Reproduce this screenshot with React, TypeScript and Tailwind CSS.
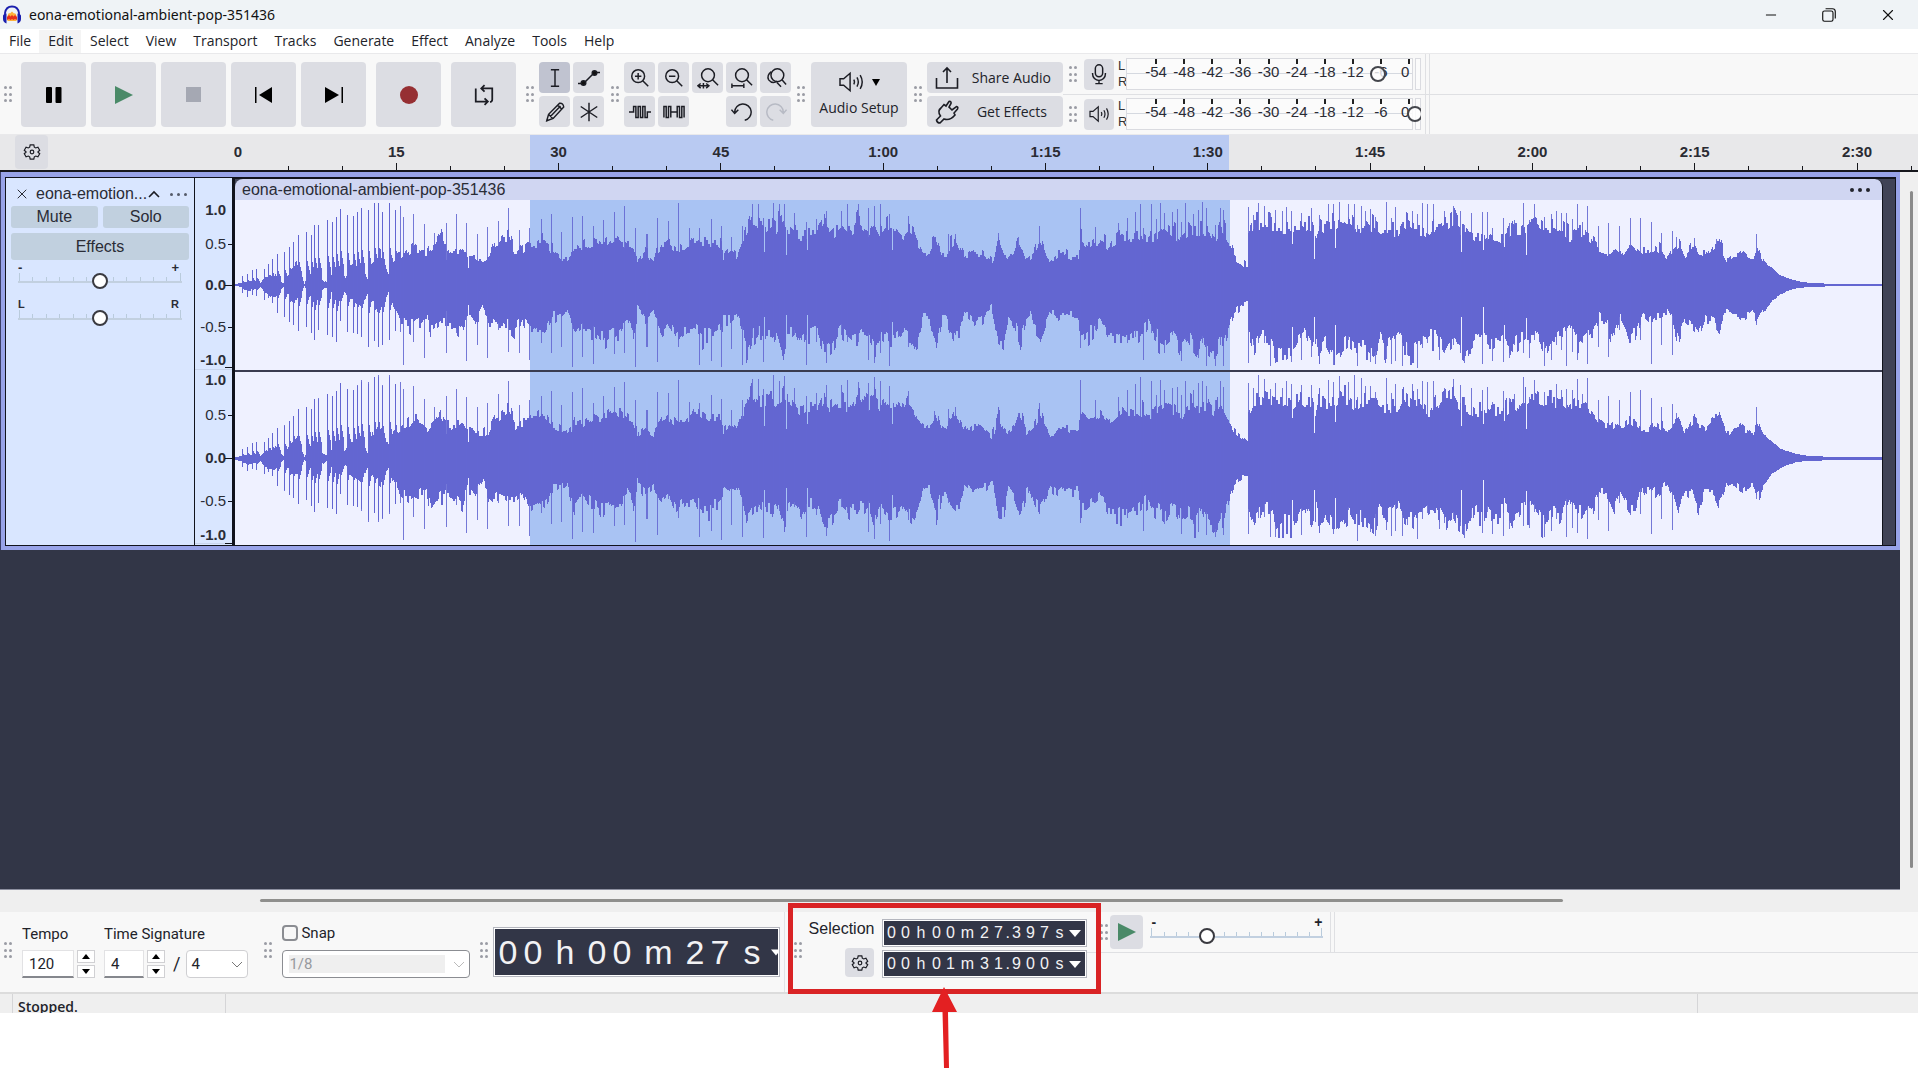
import React from "react";
import { LuMinus, LuX } from "react-icons/lu";

const ICON = "fill-none stroke-[#1c1d24] stroke-[1.6]";

// [x, peak above zero, peak below zero], in pixels of a 1645 x 170 clip
const BODY: number[][] = [
  [0, 1, 1], [6, 3, 3], [13, 5, 8], [25, 3, 3], [30, 10, 12], [40, 13, 15], [48, 2, 2], [55, 20, 16], [62, 28, 20],
  [69, 2, 2], [80, 28, 20], [87, 6, 6], [91, 4, 3], [102, 22, 18], [110, 10, 8], [115, 21, 20], [125, 28, 28],
  [132, 5, 8], [137, 25, 15], [145, 32, 28], [153, 13, 8], [157, 25, 20], [165, 28, 35], [175, 35, 40], [180, 38, 37],
  [192, 30, 32], [195, 34, 48], [200, 39, 43], [205, 47, 37], [212, 32, 38], [222, 35, 42], [227, 37, 47], [232, 30, 30],
  [240, 27, 35], [247, 24, 22], [251, 27, 28], [254, 27, 38], [260, 40, 40], [268, 47, 38], [273, 48, 40], [280, 32, 42],
  [287, 37, 35], [295, 40, 48], [302, 40, 43], [310, 43, 47], [318, 32, 30], [328, 25, 28], [332, 27, 25], [336, 30, 38],
  [340, 39, 47], [348, 37, 40], [358, 43, 45], [365, 40, 53], [375, 47, 48], [385, 45, 45], [392, 40, 35], [398, 38, 48],
  [403, 25, 24], [410, 33, 33], [417, 23, 27], [420, 33, 35], [425, 40, 45], [432, 43, 37], [440, 37, 55], [448, 35, 45],
  [458, 47, 43], [465, 45, 51], [475, 42, 48], [483, 40, 43], [488, 30, 32], [493, 35, 35], [500, 30, 30], [505, 43, 42],
  [510, 57, 62], [515, 70, 52], [522, 60, 48], [528, 58, 52], [535, 63, 52], [540, 57, 46], [547, 68, 68], [552, 58, 45],
  [558, 53, 42], [565, 50, 58], [572, 53, 45], [582, 53, 48], [588, 66, 62], [593, 48, 65], [598, 53, 58], [605, 58, 45],
  [615, 52, 52], [622, 65, 52], [632, 55, 48], [638, 62, 62], [645, 50, 48], [653, 58, 55], [660, 58, 55], [667, 52, 47],
  [672, 60, 55], [677, 53, 63], [682, 40, 55], [687, 32, 33], [693, 35, 32], [700, 45, 57], [705, 30, 35], [710, 28, 35],
  [713, 38, 45], [719, 45, 52], [723, 35, 52], [728, 27, 28], [738, 33, 37], [745, 32, 32], [750, 27, 27], [755, 22, 22],
  [758, 28, 35], [762, 45, 55], [767, 30, 58], [772, 27, 32], [778, 32, 38], [783, 45, 55], [790, 27, 35], [794, 28, 28],
  [798, 35, 42], [804, 48, 52], [808, 38, 43], [814, 22, 27], [822, 29, 33], [829, 32, 30], [835, 28, 30], [842, 28, 32],
  [844, 48, 52], [852, 40, 48], [858, 42, 45], [863, 47, 37], [872, 38, 55], [885, 52, 55], [892, 48, 55], [902, 50, 52],
  [912, 45, 40], [917, 47, 48], [928, 57, 58], [938, 50, 48], [945, 45, 57], [952, 55, 52], [960, 52, 65], [965, 52, 55],
  [972, 55, 65], [978, 45, 70], [983, 57, 58], [988, 52, 58], [993, 40, 42], [998, 28, 27], [1005, 22, 20], [1011, 18, 18],
  [1012, 48, 48], [1018, 60, 65], [1025, 62, 52], [1035, 60, 52], [1039, 58, 70], [1045, 58, 66], [1057, 58, 66],
  [1063, 62, 55], [1068, 58, 48], [1075, 60, 65], [1080, 46, 48], [1083, 60, 68], [1090, 58, 58], [1097, 58, 70],
  [1103, 63, 65], [1112, 62, 55], [1118, 55, 62], [1130, 63, 62], [1138, 58, 66], [1143, 52, 48], [1150, 52, 62],
  [1162, 52, 48], [1168, 62, 62], [1177, 55, 65], [1184, 56, 58], [1193, 48, 52], [1200, 58, 52], [1208, 63, 66],
  [1217, 67, 55], [1222, 58, 65], [1228, 55, 70], [1237, 47, 55], [1245, 48, 52], [1253, 52, 58], [1268, 47, 52],
  [1275, 57, 62], [1283, 53, 52], [1292, 62, 52], [1298, 62, 48], [1307, 58, 70], [1315, 58, 55], [1325, 57, 52],
  [1332, 48, 38], [1338, 53, 58], [1348, 53, 52], [1355, 45, 48], [1362, 38, 32], [1370, 33, 38], [1377, 35, 52],
  [1383, 32, 32], [1392, 40, 52], [1398, 35, 50], [1405, 30, 28], [1412, 30, 35], [1418, 37, 33], [1430, 27, 25],
  [1435, 33, 35], [1441, 40, 58], [1448, 28, 35], [1457, 42, 38], [1462, 33, 47], [1468, 30, 32], [1475, 40, 35],
  [1482, 43, 48], [1489, 25, 25], [1498, 28, 28], [1505, 32, 33], [1515, 25, 28], [1520, 38, 38], [1525, 27, 28],
  [1530, 20, 22], [1535, 17, 15], [1542, 10, 10], [1550, 7, 6], [1560, 4, 3], [1572, 2, 2], [1601, 1, 1], [1645, 1, 1],
];

const PEAKS: number[][] = [
  [7, 9, 8], [12, 11, 12], [17, 15, 10], [21, 16, 11], [29, 16, 15], [33, 21, 13], [37, 26, 18], [42, 31, 28],
  [49, 33, 32], [54, 38, 37], [58, 43, 40], [63, 50, 46], [71, 53, 42], [76, 50, 48], [79, 60, 55], [83, 60, 45],
  [92, 65, 50], [97, 63, 52], [101, 68, 57], [105, 76, 36], [112, 70, 47], [118, 69, 48], [122, 73, 49], [126, 77, 52],
  [133, 75, 62], [139, 82, 56], [143, 82, 62], [147, 73, 60], [154, 82, 55], [160, 75, 46], [165, 79, 47], [168, 68, 80],
  [178, 71, 57], [189, 61, 73], [199, 52, 42], [211, 62, 68], [221, 71, 48], [231, 62, 76], [242, 51, 60], [252, 58, 73],
  [263, 64, 45], [273, 77, 67], [284, 55, 68], [294, 57, 75], [306, 66, 58], [316, 71, 68], [326, 53, 62], [337, 68, 82],
  [347, 69, 72], [358, 59, 79], [368, 65, 55], [379, 73, 69], [389, 79, 68], [400, 57, 82], [411, 51, 62], [421, 67, 77],
  [432, 64, 40], [442, 82, 62], [453, 57, 45], [463, 57, 80], [475, 66, 76], [485, 59, 82], [495, 48, 64], [506, 59, 80],
  [516, 81, 53], [522, 81, 50], [527, 67, 77], [537, 82, 50], [543, 81, 55], [548, 81, 68], [558, 72, 50], [570, 63, 80],
  [580, 66, 57], [590, 74, 78], [605, 74, 50], [611, 81, 57], [622, 81, 57], [632, 77, 75], [638, 79, 78], [644, 81, 68],
  [653, 71, 81], [672, 69, 62], [698, 48, 50], [712, 51, 45], [719, 51, 50], [762, 52, 55], [782, 48, 50], [803, 59, 50],
  [844, 77, 63], [859, 58, 45], [882, 62, 50], [891, 67, 58], [899, 73, 52], [904, 81, 50], [907, 57, 75], [915, 81, 48],
  [920, 66, 52], [924, 82, 55], [928, 72, 68], [936, 73, 50], [941, 76, 55], [945, 63, 76], [949, 82, 55], [957, 71, 68],
  [962, 75, 73], [966, 83, 58], [970, 77, 81], [979, 60, 81], [984, 77, 60], [987, 75, 81], [1012, 78, 78], [1017, 70, 60],
  [1022, 82, 58], [1028, 79, 58], [1034, 72, 81], [1039, 75, 78], [1046, 74, 60], [1050, 78, 75], [1055, 74, 77],
  [1065, 72, 75], [1075, 77, 72], [1083, 70, 75], [1092, 81, 58], [1097, 81, 80], [1103, 83, 68], [1112, 81, 55],
  [1118, 81, 60], [1121, 60, 81], [1125, 79, 62], [1129, 74, 60], [1134, 76, 77], [1139, 68, 79], [1150, 83, 74],
  [1155, 67, 79], [1159, 78, 76], [1166, 63, 81], [1171, 62, 70], [1176, 74, 60], [1181, 71, 83], [1186, 82, 63],
  [1191, 81, 58], [1197, 81, 55], [1203, 58, 75], [1208, 74, 68], [1217, 79, 60], [1224, 74, 68], [1228, 60, 78],
  [1234, 72, 60], [1245, 73, 79], [1250, 73, 55], [1255, 57, 76], [1266, 67, 77], [1272, 62, 73], [1277, 65, 60],
  [1286, 82, 68], [1292, 65, 73], [1297, 81, 55], [1307, 68, 81], [1314, 71, 75], [1319, 74, 60], [1324, 72, 65],
  [1329, 72, 81], [1335, 66, 67], [1340, 81, 75], [1345, 63, 58], [1350, 79, 79], [1361, 59, 62], [1371, 62, 72],
  [1382, 59, 45], [1393, 67, 58], [1403, 67, 55], [1414, 63, 79], [1424, 52, 60], [1435, 54, 70], [1439, 48, 50],
  [1457, 47, 42], [1479, 46, 45], [1519, 51, 40],
];

const DIPS: number[][] = [
  [211, 25, 26], [233, 17, 20], [402, 23, 20], [487, 25, 30], [528, 33, 32], [550, 30, 30], [571, 35, 30], [656, 35, 37],
  [1056, 41, 42], [1078, 26, 32], [1099, 37, 40], [1225, 33, 32], [1246, 35, 22], [1267, 38, 40], [1289, 30, 33],
];

function buildWave(seed: number, gain: number) {
  let state = seed;
  const random = () => {
    state = (state * 16807) % 2147483647;
    return state / 2147483647;
  };
  const up: number[] = [];
  const down: number[] = [];
  let seg = 0;
  let noiseUp = 0;
  let noiseDown = 0;
  for (let x = 0; x < 1645; x++) {
    while (seg < BODY.length - 2 && x >= BODY[seg + 1][0]) seg++;
    const [x0, u0, d0] = BODY[seg];
    const [x1, u1, d1] = BODY[seg + 1];
    const k = (x - x0) / (x1 - x0);
    if (x % 2 === 0) {
      noiseUp = (random() - 0.55) * 0.24 + (random() > 0.88 ? 0.16 : 0);
      noiseDown = (random() - 0.55) * 0.28 + (random() > 0.86 ? 0.18 : 0);
    }
    const calm = x > 1525 ? 0.2 : 1;
    const fade = x < 130 ? 0.75 : 1;
    up.push(Math.min(80, (u0 + (u1 - u0) * k) * (1 + noiseUp * calm) * fade));
    down.push(Math.min(80, (d0 + (d1 - d0) * k) * (1 + noiseDown * calm) * fade));
  }
  PEAKS.forEach(([x, u, d]) => {
    if (x < 165) {
      [1, 0.45, 0.36, 0.28].forEach((k, i) => {
        up[x + i] = Math.max(up[x + i], u * k);
        down[x + i] = Math.max(down[x + i], d * k);
      });
    }
  });
  DIPS.forEach(([x, u, d]) => {
    up[x] = u;
    down[x] = d;
  });
  let body = "M0 85";
  up.forEach((h, x) => (body += `V${85 - Math.round(h * gain)}H${x + 1}`));
  for (let x = 1644; x >= 0; x--) body += `V${85 + Math.max(1, Math.round(down[x] * gain))}H${x}`;
  body += "Z";
  let peaks = "";
  PEAKS.forEach(([x, u, d]) => {
    const g = gain === 1 ? 1 : 0.92 + random() * 0.09;
    peaks += `M${x} ${85 - Math.round(u * g)}h1V${85 + Math.round(d * g)}h-1Z`;
  });
  return { body, peaks };
}

const WAVES = [buildWave(4217, 1), buildWave(90631, 0.97)];

function Waveform({ index, className }: { index: number; className: string }) {
  const { body, peaks } = WAVES[index];
  return (
    <div className={`bg-[linear-gradient(to_right,#eff1ff_17.93%,#a9c3f3_17.93%,#a9c3f3_60.43%,#eff1ff_60.43%)] ${className}`}>
      <svg viewBox="0 0 1645 170" preserveAspectRatio="none" className="block h-full w-full fill-[#6366d1]" shapeRendering="crispEdges">
        <path d={body} />
        <path d={peaks} fillOpacity="0.88" />
      </svg>
    </div>
  );
}

function Grip({ className = "" }: { className?: string }) {
  return (
    <span className={`grid h-4 w-[9px] shrink-0 grid-cols-2 content-between justify-between ${className}`}>
      {[0, 1, 2, 3, 4, 5].map((i) => (
        <i key={i} className="size-[3px] rounded-full bg-[#9a9ca4]" />
      ))}
    </span>
  );
}

function BigButton({ label, children, className = "" }: { label: string; children: React.ReactNode; className?: string }) {
  return (
    <button aria-label={label} className={`flex h-[65px] w-[65px] items-center justify-center rounded bg-[#dcdde3] ${className}`}>
      {children}
    </button>
  );
}

function ToolButton({ label, children, active }: { label: string; children?: React.ReactNode; active?: boolean }) {
  return (
    <button aria-label={label} className={`flex h-[31px] w-[31px] items-center justify-center rounded ${active ? "bg-[#c0c3d0]" : "bg-[#dcdde3]"}`}>
      <svg viewBox="0 0 24 24" className={`size-[22px] ${ICON}`}>{children}</svg>
    </button>
  );
}

function Gear() {
  return (
    <svg viewBox="0 0 24 24" className={`size-[18px] ${ICON}`}>
      <path d="M9.6 2.5h4.8l.7 3.1 1.8 1 3-1 2.4 4.1-2.3 2.1v.4l2.3 2.1-2.4 4.1-3-1-1.8 1-.7 3.1H9.6l-.7-3.1-1.8-1-3 1-2.4-4.1L4 12.2v-.4L1.7 9.7l2.4-4.1 3 1 1.8-1z" />
      <circle cx="12" cy="12" r="2.4" />
    </svg>
  );
}

function Speaker({ className }: { className: string }) {
  return (
    <svg viewBox="0 0 28 24" className={`${ICON} ${className}`}>
      <path d="M2 8.5h4l7-6v19l-7-6H2z" />
      <path d="M17 9.5q1.5 2.5 0 5M20.5 7q3 5 0 10M24 4.5q4.500 7.500 0 15" />
    </svg>
  );
}

function Slider({ label, value, ticks, className }: { label: string; value: number; ticks: number; className: string }) {
  return (
    <div className={`relative h-4 ${className}`}>
      <div className="flex h-[10px] items-end justify-between border-b-2 border-[#c2d0e0] px-px">
        {Array.from({ length: ticks }, (_, i) => (
          <i key={i} className={`w-px bg-[#b9cbdc] ${i === 0 || i === ticks - 1 ? "h-2" : "h-1"}`} />
        ))}
      </div>
      <input
        type="range"
        aria-label={label}
        defaultValue={value}
        className="absolute inset-0 h-4 w-full appearance-none bg-transparent [&::-webkit-slider-thumb]:size-4 [&::-webkit-slider-thumb]:appearance-none [&::-webkit-slider-thumb]:rounded-full [&::-webkit-slider-thumb]:border-2 [&::-webkit-slider-thumb]:border-[#3a3a40] [&::-webkit-slider-thumb]:bg-white"
      />
    </div>
  );
}

const DB = [-54, -48, -42, -36, -30, -24, -18, -12, -6, 0];

function Meter({ label, icon, knob, className }: { label: string; icon: React.ReactNode; knob: string; className: string }) {
  return (
    <div className={`flex items-center ${className}`}>
      <Grip className="ml-[6px]" />
      <button aria-label={label} className="ml-[6px] flex h-[31px] w-[30px] items-center justify-center rounded bg-[#dcdde3]">{icon}</button>
      <div className="ml-1 w-2 font-[Liberation_Sans,sans-serif] text-[13px] leading-4 text-[#333]">
        <div>L</div>
        <div>R</div>
      </div>
      <div className="relative flex h-8 w-[295px] gap-[2px] overflow-hidden">
        <div className="relative flex-1 border border-[#dadbe0] bg-[#fbfbfb]">
          <div className="absolute inset-x-0 top-[14px] h-px bg-[#d5d9e0]" />
          {DB.map((db) => (
            <div key={db} className="absolute top-0 flex w-8 -translate-x-1/2 flex-col items-center" style={{ left: `${10.2 + ((db + 54) / 54) * 88.8}%` }}>
              <i className="h-[5px] w-[2px] bg-[#222]" />
              <span className={`font-[Liberation_Sans,sans-serif] text-[15px] leading-4 text-[#2b2d36] ${db === 0 ? "-ml-2" : ""}`}>{db}</span>
            </div>
          ))}
        </div>
        <div className="w-[6px] border border-[#dadbe0] bg-[#fbfbfb]" />
        <i className={`absolute top-2 size-4 rounded-full border-2 border-[#44464c] bg-white/80 ${knob}`} />
      </div>
    </div>
  );
}

const MARKS = Array.from({ length: 32 }, (_, i) => i * 5);
const MARK_LABELS = ["0", "15", "30", "45", "1:00", "1:15", "1:30", "1:45", "2:00", "2:15", "2:30"];

function Ruler() {
  return (
    <div className="flex h-[37px] border-b-2 border-[#16171c] bg-[#e8e8ea]">
      <div className="w-[234px] shrink-0 pl-[15px]">
        <button aria-label="Timeline options" className="flex h-[34px] w-[33px] items-center justify-center rounded bg-[#dcdde3]"><Gear /></button>
      </div>
      <div className="relative flex-1 bg-[linear-gradient(to_right,transparent_17.58%,#b9caf2_17.58%,#b9caf2_59.09%,transparent_59.09%)]">
        {MARKS.map((s) => (
          <div key={s} className="absolute bottom-0 flex w-12 -translate-x-1/2 flex-col items-center" style={{ left: `${(s * 10.82) / 16.84}%` }}>
            {s % 15 === 0 && <span className={`font-[Liberation_Sans,sans-serif] text-[15px] leading-5 font-bold text-[#2a2b33] ${s === 0 ? "pl-2" : ""}`}>{MARK_LABELS[s / 15]}</span>}
            <i className={`w-px bg-[#16171c] ${s === 0 ? "mt-1 h-1 opacity-0" : s % 15 === 0 ? "mt-px h-[7px]" : "h-1"}`} />
          </div>
        ))}
      </div>
    </div>
  );
}

const SCALES = [
  { h: "h-[170px]", rows: "grid-rows-[20px_48px_34px_50px_16px]" },
  { h: "h-[174px]", rows: "grid-rows-[20px_50px_36px_50px_18px]" },
];

function Track() {
  return (
    <div className="border-l border-[#3b3f66] bg-[#98a3e8] px-1 pt-[5px] pb-1">
      <div className="flex border border-[#11131c] bg-[#404356] font-[Liberation_Sans,sans-serif] text-[#2a2c36]">
        <div className="w-[189px] shrink-0 border-r border-[#11131c] bg-[#d9e6ff] px-[5px] pt-[5px]">
          <div className="flex h-[22px] items-center pl-[3px]">
            <button aria-label="Close track"><LuX className="size-4" strokeWidth={1.5} /></button>
            <span className="ml-[6px] text-base leading-5">eona-emotion...</span>
            <svg viewBox="0 0 14 8" className={`h-2 w-[14px] ${ICON}`}><path d="M2 7l5-5 5 5" /></svg>
            <button aria-label="Track menu" className="ml-auto flex gap-1 pr-[2px]">
              {[0, 1, 2].map((i) => <i key={i} className="size-[3px] rounded-full bg-[#555b6a]" />)}
            </button>
          </div>
          <div className="mt-px flex gap-[5px] text-base leading-5">
            <button className="h-[22px] flex-1 rounded-[3px] bg-[#c1d0df]">Mute</button>
            <button className="h-[22px] flex-1 rounded-[3px] bg-[#c1d0df]">Solo</button>
          </div>
          <button className="mt-[5px] h-[27px] w-full rounded-[3px] bg-[#c1d0df] text-base leading-5">Effects</button>
          <div className="mt-[3px] flex justify-between pr-[10px] pl-[7px] text-[13px] leading-[10px] font-bold"><span>-</span><span>+</span></div>
          <Slider label="Volume" value={50} ticks={13} className="mx-[7px]" />
          <div className="mt-[10px] flex justify-between pr-[10px] pl-[7px] text-[11px] leading-[11px] font-bold"><span>L</span><span>R</span></div>
          <Slider label="Pan" value={50} ticks={13} className="mx-[7px]" />
        </div>
        <div className="w-10 shrink-0 border-r-[3px] border-[#11131c] bg-[#d9e6ff] pt-[22px] text-[15px] leading-4">
          {SCALES.map((s) => (
            <div key={s.rows} className={`grid border-b border-[#c8d4ec] ${s.h} ${s.rows}`}>
              {["1.0", "0.5", "0.0", "-0.5", "-1.0"].map((v) => (
                <div key={v} className={`relative flex items-center justify-end pr-[6px] ${v.endsWith("0") ? "font-bold" : ""}`}>
                  {v}
                  {v !== "1.0" && <i className={`absolute right-0 h-px bg-[#11131c] ${v === "-1.0" ? "bottom-0 w-[7px]" : v === "0.0" ? "w-[7px]" : "w-1"}`} />}
                </div>
              ))}
            </div>
          ))}
        </div>
        <div className="min-w-0 flex-1 border-t border-[#11131c] pr-3">
          <div className="flex h-[21px] items-center justify-between rounded-t-lg border-r border-[#11131c] bg-[#d0d6f2] pr-3 pl-[7px] text-base leading-5">
            <span>eona-emotional-ambient-pop-351436</span>
            <button aria-label="Clip menu" className="flex gap-1">
              {[0, 1, 2].map((i) => <i key={i} className="size-[4px] rounded-full bg-[#22242e]" />)}
            </button>
          </div>
          <div className="border-r border-[#11131c]">
            <Waveform index={0} className="h-[170px]" />
            <Waveform index={1} className="h-[175px] border-t-2 border-[#3a3c50]" />
          </div>
        </div>
      </div>
    </div>
  );
}

const BIG_CELLS: Record<string, string> = { h: "w-[39px]", m: "w-[48px]", s: "w-[39px]" };
const SMALL_CELLS: Record<string, string> = { h: "w-[17px]", m: "w-5", s: "w-4", ".": "w-1" };

function TimeText({ text, big }: { text: string; big?: boolean }) {
  return (
    <div className={`flex items-center border border-[#b4b6be] bg-white p-px ${big ? "h-[50px] w-[287px]" : "h-7 w-[205px]"}`}>
      <div className={`flex h-full w-full items-center overflow-hidden bg-[#323647] font-[Liberation_Sans,sans-serif] text-[#f2f2f4] ${big ? "text-[34px]" : "text-base"}`}>
        {text.split("").map((c, i) => (
          <span key={i} className={`shrink-0 text-center ${big ? BIG_CELLS[c] || "w-[25px]" : SMALL_CELLS[c] || "w-[14px]"}`}>{c}</span>
        ))}
        <button aria-label="Time format" className="ml-auto">
          <svg viewBox="0 0 12 7" className={`h-[7px] fill-white ${big ? "w-[10px]" : "mr-1 w-3"}`}><path d="M0 0h12L6 7z" /></svg>
        </button>
      </div>
    </div>
  );
}

function Spinner({ label, value, width }: { label: string; value: string; width: string }) {
  return (
    <div className="flex gap-[3px]">
      <input aria-label={label} defaultValue={value} className={`h-7 border border-b-2 border-[#e2e2e4] border-b-[#85878d] bg-white pl-[6px] text-[15px] ${width}`} />
      <div className="flex w-[18px] flex-col gap-[2px]">
        <button aria-label={`${label} up`} className="flex flex-1 items-center justify-center border border-[#d0d0d3] bg-white">
          <svg viewBox="0 0 8 5" className="h-[5px] w-2"><path d="M0 5h8L4 0z" /></svg>
        </button>
        <button aria-label={`${label} down`} className="flex flex-1 items-center justify-center border border-[#d0d0d3] bg-white">
          <svg viewBox="0 0 8 5" className="h-[5px] w-2"><path d="M0 0h8L4 5z" /></svg>
        </button>
      </div>
    </div>
  );
}

function App() {
  return (
    <div className="flex min-h-screen flex-col bg-white font-[Open_Sans,Noto_Sans,sans-serif] text-[#22232a]">
      <header className="flex h-[29px] items-center bg-[#eff3f6] pl-[2px]">
        <svg viewBox="0 0 20 20" className="size-5">
          <path d="M5.500 11q1-4 2.500-2.500l2-2 2 2q2-1 2.500 2.500v5h-9z" fill="#ffb13b" />
          <path d="M5 12l2-2 1.500 1.500L10 10l1.500 1.500L13 10l2 2v3l-2-1-1.500 1L10 14l-1.500 1L7 14l-2 1z" fill="#e8301c" />
          <path d="M3 12V8q1-6.500 7-6.500T17 8v4" fill="none" stroke="#1b1fae" strokeWidth="1.800" />
          <path d="M1 11q0-2 3.500-2.500v10Q1 17 1 14zM19 11q0-2-3.500-2.500v10Q19 17 19 14z" fill="#1b1fae" />
        </svg>
        <h1 className="ml-[7px] font-[Noto_Sans,sans-serif] text-sm text-[#111]">eona-emotional-ambient-pop-351436</h1>
        <div className="ml-auto flex items-center gap-[42px] pr-[21px] text-[#111]">
          <button aria-label="Minimize"><LuMinus className="size-4" strokeWidth={1.5} /></button>
          <button aria-label="Restore">
            <svg viewBox="0 0 14 14" className="size-4 fill-none stroke-[#111]"><rect x="1.500" y="3.500" width="9" height="9" rx="1.500" /><path d="M4 1.500h6a2.500 2.500 0 0 1 2.500 2.500v6" /></svg>
          </button>
          <button aria-label="Close"><LuX className="size-[18px]" strokeWidth={1.5} /></button>
        </div>
      </header>

      <nav className="flex h-[24px] items-center text-sm">
        {["File", "Edit", "Select", "View", "Transport", "Tracks", "Generate", "Effect", "Analyze", "Tools", "Help"].map((m) => (
          <button key={m} className={`h-[23px] pr-2 pl-[9px] ${m === "Edit" ? "bg-[#f4f4f4]" : ""}`}>{m}</button>
        ))}
      </nav>

      <div className="flex h-[82px] border-y border-[#e9e9eb] bg-[#f8f8f8]">
        <div className="flex items-start pt-2 pl-1">
          <Grip className="mt-6" />
          <BigButton label="Pause" className="ml-2"><svg viewBox="0 0 16 16" className="size-4"><rect width="6" height="16" rx="1" /><rect x="9.500" width="6" height="16" rx="1" /></svg></BigButton>
          <BigButton label="Play" className="ml-[5px]"><svg viewBox="0 0 18 18" className="size-[18px] fill-[#4a8a68]"><path d="M0 0l18 9-18 9z" /></svg></BigButton>
          <BigButton label="Stop" className="ml-[5px]"><i className="size-[15px] bg-[#a5a8b3]" /></BigButton>
          <BigButton label="Skip to start" className="ml-[5px]"><svg viewBox="0 0 18 16" className="h-4 w-[18px]"><path d="M0 0h1.500v16H0zM17 0v16L4 8z" /></svg></BigButton>
          <BigButton label="Skip to end" className="ml-[5px]"><svg viewBox="0 0 18 16" className="h-4 w-[18px]"><path d="M16.500 0H18v16h-1.500zM0 0v16l14-8z" /></svg></BigButton>
          <BigButton label="Record" className="ml-[10px]"><i className="size-[18px] rounded-full bg-[#962f33]" /></BigButton>
          <BigButton label="Loop" className="ml-[10px]">
            <svg viewBox="0 0 20 20" className={`size-[22px] ${ICON}`}><path d="M2.500 4v12h10M8 4h9.500v10q0 2-2 2.500M10.500 1L7.500 4l3 3M10.500 13l3 3-3 3" /></svg>
          </BigButton>
          <Grip className="mt-6 ml-[10px]" />
          <div className="ml-1 grid grid-cols-2 gap-[3px]">
            <ToolButton label="Selection" active><path d="M7.500 3h9M7.500 21h9M12 3v18" /></ToolButton>
            <ToolButton label="Envelope"><path d="M0 18h6L18 6h6" /><circle cx="6" cy="17.500" r="2.500" fill="#111" /><circle cx="18" cy="6.500" r="2.500" fill="#111" /></ToolButton>
            <ToolButton label="Draw"><path d="M3 21.500l2-7L17 2.500q4-.5 4.500 4L10 19zM5 14.500l4.500 4.500M15 4.500L19.500 9M7 17L18 5.500" /></ToolButton>
            <ToolButton label="Multi"><path d="M12 2v20M3 6l18 12M21 6L3 18" /></ToolButton>
          </div>
          <Grip className="mt-6 ml-[7px]" />
          <div className="ml-1 grid grid-cols-5 gap-[3px]">
            <ToolButton label="Zoom in"><circle cx="10" cy="10" r="7" /><path d="M15 15l6 6M6.500 10h7M10 6.500v7" /></ToolButton>
            <ToolButton label="Zoom out"><circle cx="10" cy="10" r="7" /><path d="M15 15l6 6M6.500 10h7" /></ToolButton>
            <ToolButton label="Fit selection"><circle cx="12" cy="9" r="7" /><path d="M17 14l6 6M1 20.500h12M4 18l-3 2.500L4 23M10 18l3 2.500-3 2.500M7 17.500v6" /></ToolButton>
            <ToolButton label="Fit project"><circle cx="12" cy="9" r="7" /><path d="M17 14l6 6M1 20.500h13M1 18v5M14 18v5" /></ToolButton>
            <ToolButton label="Zoom toggle"><circle cx="13.500" cy="9" r="7" /><path d="M18.500 14l4.500 5M7 5q-5.500 4-3 9 4 5 9.500 1.500M13 17l4.500 4.500" /></ToolButton>
            <ToolButton label="Trim outside selection"><path d="M0 12h5V6h2.500v12h2.500V6h2.500v12H15V6h2.500v12H20v-6h4" /></ToolButton>
            <ToolButton label="Silence selection"><path d="M1 18V6h2.500v12H6V6h2.500v12M8.500 12h7M15.500 18V6H18v12h2.500V6H23v12" /></ToolButton>
            <span />
            <ToolButton label="Undo"><path d="M15 21a9 9 0 1 0-11-9M.5 9.500L4 13.500l4-4" /></ToolButton>
            <ToolButton label="Redo"><path className="stroke-[#b7bac4]" d="M9 21a9 9 0 1 1 11-9M23.500 9.500L20 13.500l-4-4" /></ToolButton>
          </div>
          <Grip className="mt-6 ml-[6px]" />
          <button className="ml-[5px] flex h-[65px] w-24 flex-col items-center justify-center gap-[5px] rounded bg-[#dcdde3] text-sm">
            <span className="flex items-center gap-2"><Speaker className="h-[22px] w-[26px]" /><svg viewBox="0 0 8 7" className="h-[7px] w-2"><path d="M0 0h8L4 7z" /></svg></span>
            <span>Audio Setup</span>
          </button>
          <Grip className="mt-6 ml-[7px]" />
          <div className="ml-1 flex w-[136px] flex-col gap-[3px] text-sm">
            <button className="flex h-[31px] items-center justify-between rounded bg-[#dcdde3] pr-3 pl-2">
              <svg viewBox="0 0 24 24" className={`size-6 ${ICON}`}><path d="M1.500 12v10h21V12M12 17V2M8 6l4-4 4 4" /></svg>Share Audio
            </button>
            <button className="flex h-[31px] items-center justify-between rounded bg-[#dcdde3] pr-4 pl-2">
              <svg viewBox="0 0 24 24" className={`size-6 ${ICON}`}><path d="M1.500 20l4-4Q2 11 6 8l3-3.500L11 6l3-4.500q2.500-.5 2 2L14 7l3 3 4.500-3.500q2 .5 1 2.500L19 13l1 2q-5 6-11 4l-4 4q-3 0-3.500-3z" /></svg>Get Effects
            </button>
          </div>
        </div>
        <div className="flex flex-1 flex-col">
          <div className="flex border-b border-[#dfe0e3]">
            <Meter label="Record meter" className="h-10" knob="left-[244px]" icon={<svg viewBox="0 0 24 24" className={`size-[22px] ${ICON}`}><rect x="8" y="2" width="8" height="13" rx="4" /><path d="M5 11v1a7 7 0 0 0 14 0v-1M12 19v3M8 22.500h8" /></svg>} />
            <div className="ml-[4px] w-[5px] border-x border-[#dfe0e3]" />
          </div>
          <div className="flex flex-1">
            <Meter label="Playback meter" className="h-[38px]" knob="left-[281px]" icon={<Speaker className="h-[18px] w-[22px]" />} />
            <div className="ml-[4px] w-[5px] border-x border-[#dfe0e3]" />
          </div>
        </div>
      </div>

      <Ruler />

      <main className="flex flex-1 bg-[#efefef]">
        <div className="min-w-0 flex-1 border-b border-[#8d90a0] bg-[#323647]"><Track /></div>
        <div className="flex w-[18px] justify-center pt-[19px] pb-[22px] pl-1"><i className="w-[3px] rounded bg-[#8a8a8a]" /></div>
      </main>

      <div className="h-[22px] bg-[#efefef] pt-[9px] pr-[355px] pl-[260px]"><div className="h-[3px] rounded bg-[#8f8f8d]" /></div>

      <footer>
        <div className="flex h-[82px] items-start border-b-2 border-[#dcdcdc] bg-[#f8f8f8] pl-1 font-[Roboto,Open_Sans,sans-serif] text-[15px]">
          <Grip className="mt-[30px]" />
          <div className="mt-[11px] ml-[9px] flex h-[55px] flex-col justify-between">
            <span>Tempo</span>
            <Spinner label="Tempo" value="120" width="w-[52px]" />
          </div>
          <div className="mt-[11px] ml-[9px] flex h-[55px] flex-col justify-between">
            <span>Time Signature</span>
            <div className="flex items-center">
              <Spinner label="Upper time signature" value="4" width="w-10" />
              <span className="ml-2 text-lg">/</span>
              <div className="relative ml-[6px]">
                <select aria-label="Lower time signature" className="block h-7 w-[62px] appearance-none rounded-sm border border-[#cfcfd2] bg-white pl-1"><option>4</option></select>
                <svg viewBox="0 0 12 7" className="pointer-events-none absolute top-[11px] right-[5px] h-[7px] w-3 fill-none stroke-[#777]"><path d="M1 1l5 5 5-5" /></svg>
              </div>
            </div>
          </div>
          <Grip className="mt-[30px] ml-4" />
          <div className="mt-[11px] ml-[9px] flex h-[55px] flex-col justify-between">
            <label className="flex items-center gap-[3px] leading-5"><input type="checkbox" className="size-4 appearance-none rounded border-2 border-[#8b8d92] bg-[#f8f8f8]" />Snap</label>
            <div className="relative">
              <select disabled aria-label="Snap to" className="block h-7 w-[188px] appearance-none rounded-sm border border-[#8b8d92] bg-white bg-[linear-gradient(#efefef,#efefef)] bg-[length:156px_18px] bg-[position:6px_4px] bg-no-repeat pl-[6px] text-[#97999e] opacity-100"><option>1/8</option></select>
              <svg viewBox="0 0 12 7" className="pointer-events-none absolute top-[11px] right-[5px] h-[7px] w-3 fill-none stroke-[#bbb]"><path d="M1 1l5 5 5-5" /></svg>
            </div>
          </div>
          <Grip className="mt-[30px] ml-[10px]" />
          <div className="mt-[15px] ml-1"><TimeText text="00h00m27s" big /></div>
          <div className="relative ml-1 flex h-20 items-start border-l border-[#e3e3e6] pl-[9px]">
            <Grip className="mt-[30px]" />
            <div className="ml-[6px] flex w-[65px] flex-col items-end pt-2">
              <span className="font-[Liberation_Sans,sans-serif] text-base leading-[18px]">Selection</span>
              <button aria-label="Selection options" className="mt-[10px] flex h-[29px] w-[29px] items-center justify-center rounded-sm bg-[#dcdde3]"><Gear /></button>
            </div>
            <div className="ml-2 flex flex-col gap-[3px] pt-[7px]">
              <TimeText text="00h00m27.397s" />
              <TimeText text="00h01m31.900s" />
            </div>
            {/* callout round the selection toolbar */}
            <div className="pointer-events-none absolute -top-[9px] left-[3px] h-[91px] w-[313px] border-[5px] border-[#d92325]" />
            <svg viewBox="0 0 26 82" className="absolute top-[75px] left-[147px] h-[82px] w-[26px] fill-[#e32022]"><path d="M12 0l13 25h-9l1 56h-5L10.500 25H0z" /></svg>
          </div>
          <div className="flex flex-1 flex-col border-b border-[#dfe0e3]">
            <div className="flex h-10">
              <Grip className="mt-3 ml-[13px]" />
              <button aria-label="Play at speed" className="mt-[3px] ml-px flex h-[34px] w-[33px] items-center justify-center rounded bg-[#dcdde3]"><svg viewBox="0 0 18 18" className="size-[18px] fill-[#4a8a68]"><path d="M0 0l18 9-18 9z" /></svg></button>
              <div className="ml-[7px] w-[173px] pt-[5px]">
                <div className="flex justify-between px-px font-[Liberation_Sans,sans-serif] text-sm leading-[11px] font-bold"><span>-</span><span>+</span></div>
                <Slider label="Playback speed" value={31} ticks={15} className="" />
              </div>
              <div className="ml-[7px] w-[5px] border-x border-[#dfe0e3]" />
            </div>
          </div>
        </div>
        <div className="mb-[56px] flex h-[19px] overflow-hidden bg-[#efefef] pl-3 text-sm font-semibold">
          <span className="w-[214px] border-x border-[#d5d5d7] pt-[3px] pl-[5px] leading-5">Stopped.</span>
          <span className="mr-[220px] flex-1 border-r border-[#d5d5d7]" />
        </div>
      </footer>
    </div>
  );
}

export default App;
